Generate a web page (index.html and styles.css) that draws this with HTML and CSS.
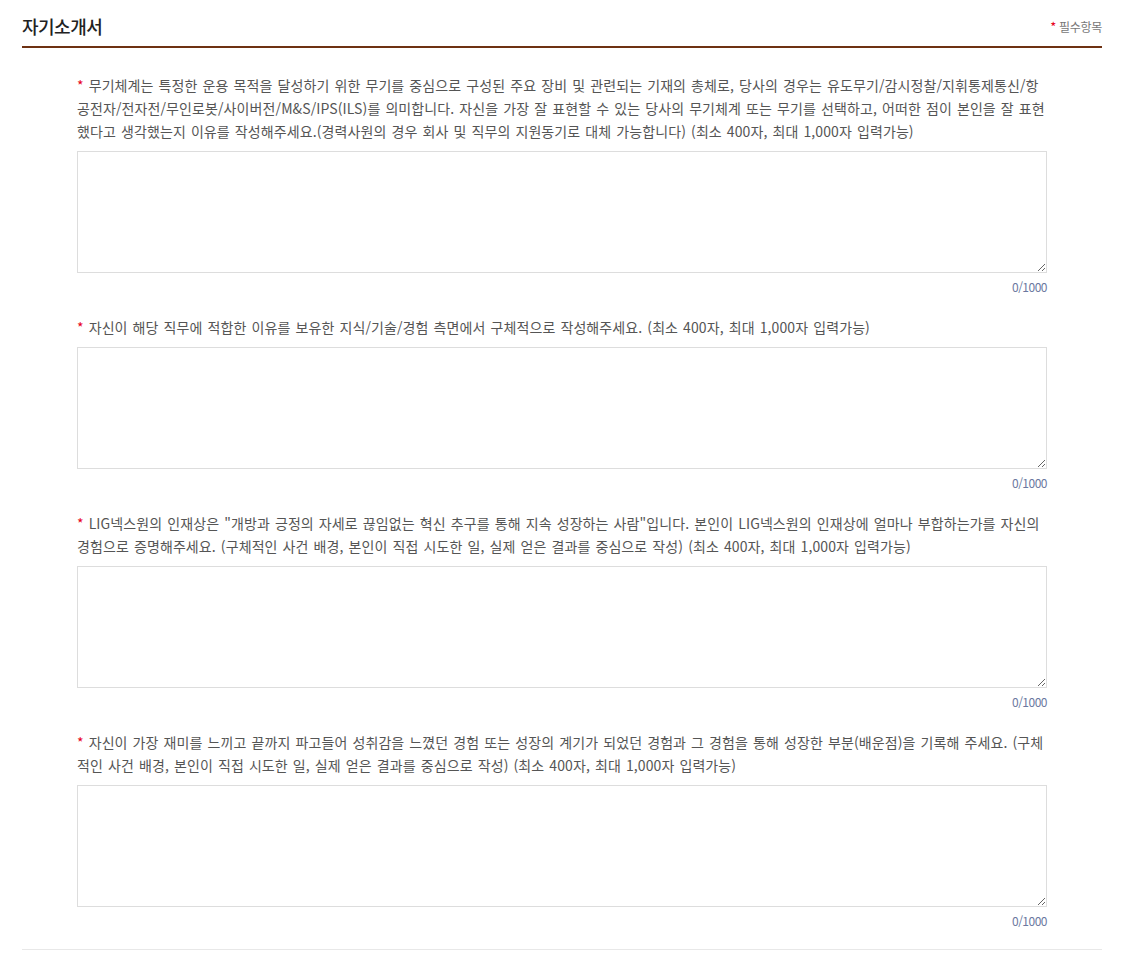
FILE: index.html
```html
<!DOCTYPE html>
<html lang="ko">
<head>
  <meta charset="UTF-8" />
  <title>자기소개서</title>
  <link rel="stylesheet" href="styles.css">
</head>
<body>

<!-- 자기소개서 -->
<div class="essay">
  <div class="essay-head">
    <h2>자기소개서</h2>
    <span class="req-note"><em>*</em> 필수항목</span>
  </div>

  <div class="essay-list">
    <div class="essay-item">
      <p class="question"><em>*</em> 무기체계는 특정한 운용 목적을 달성하기 위한 무기를 중심으로 구성된 주요 장비 및 관련되는 기재의 총체로, 당사의 경우는 유도무기/감시정찰/지휘통제통신/항공전자/전자전/무인로봇/사이버전/M&amp;S/IPS(ILS)를 의미합니다. 자신을 가장 잘 표현할 수 있는 당사의 무기체계 또는 무기를 선택하고, 어떠한 점이 본인을 잘 표현했다고 생각했는지 이유를 작성해주세요.(경력사원의 경우 회사 및 직무의 지원동기로 대체 가능합니다) (최소 400자, 최대 1,000자 입력가능)</p>
      <textarea></textarea>
      <div class="count">0/1000</div>
    </div>

    <div class="essay-item">
      <p class="question"><em>*</em> 자신이 해당 직무에 적합한 이유를 보유한 지식/기술/경험 측면에서 구체적으로 작성해주세요. (최소 400자, 최대 1,000자 입력가능)</p>
      <textarea></textarea>
      <div class="count">0/1000</div>
    </div>

    <div class="essay-item">
      <p class="question"><em>*</em> LIG넥스원의 인재상은 "개방과 긍정의 자세로 끊임없는 혁신 추구를 통해 지속 성장하는 사람"입니다. 본인이 LIG넥스원의 인재상에 얼마나 부합하는가를 자신의 경험으로 증명해주세요. (구체적인 사건 배경, 본인이 직접 시도한 일, 실제 얻은 결과를 중심으로 작성) (최소 400자, 최대 1,000자 입력가능)</p>
      <textarea></textarea>
      <div class="count">0/1000</div>
    </div>

    <div class="essay-item">
      <p class="question"><em>*</em> 자신이 가장 재미를 느끼고 끝까지 파고들어 성취감을 느꼈던 경험 또는 성장의 계기가 되었던 경험과 그 경험을 통해 성장한 부분(배운점)을 기록해 주세요. (구체적인 사건 배경, 본인이 직접 시도한 일, 실제 얻은 결과를 중심으로 작성) (최소 400자, 최대 1,000자 입력가능)</p>
      <textarea></textarea>
      <div class="count">0/1000</div>
    </div>
  </div>
</div>

</body>
</html>
```

FILE: styles.css
```css
body {
  font-family: "Noto Sans CJK KR", "Noto Sans", sans-serif;
  background-color: #fff;
  color: #555;
  margin: 0;
}
.essay {
  margin: 0 26px 0 22px;
  padding-top: 12px;
}
.essay-head {
  display: flex;
  justify-content: space-between;
  align-items: flex-end;
  border-bottom: 2px solid #6e3112;
  padding-bottom: 6px;
}
.essay-head h2 {
  margin: 0;
  font-size: 18px;
  font-weight: 500;
  color: #222;
  line-height: 28px;
  letter-spacing: -0.5px;
}
.req-note {
  font-size: 12px;
  color: #777;
  line-height: 18px;
  padding-bottom: 4px;
  letter-spacing: -0.3px;
}
em {
  font-style: normal;
  color: #e8001c;
}
.req-note em {
  font-size: 13px;
}
.essay-list {
  padding: 26px 55px 19px;
  border-bottom: 1px solid #e8e8e8;
}
.essay-item + .essay-item {
  margin-top: 20px;
}
.question {
  margin: 0 0 8px;
  font-size: 14px;
  line-height: 23px;
  letter-spacing: 0.1px;
  word-spacing: 1px;
}
textarea {
  display: block;
  box-sizing: border-box;
  width: 100%;
  height: 122px;
  border: 1px solid #ddd;
  margin: 0;
}
.count {
  margin-top: 5px;
  text-align: right;
  font-size: 12px;
  line-height: 18px;
  color: #6b78a0;
  letter-spacing: -0.5px;
}
```
